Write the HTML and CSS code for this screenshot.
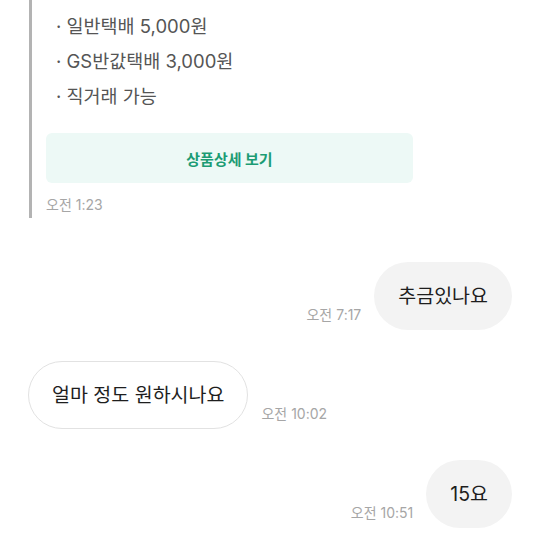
FILE: index.html
```html
<!DOCTYPE html>
<html lang="ko">

<head>
    <meta charset="utf-8">
    <title>채팅</title>
    <link rel="stylesheet" href="styles.css">
</head>

<body>
    <main class="chat">

        <section class="share">
            <ul class="info">
                <li>· 거래방법</li>
                <li>· 일반택배 5,000원</li>
                <li>· GS반값택배 3,000원</li>
                <li>· 직거래 가능</li>
            </ul>
            <button class="detail">상품상세 보기</button>
            <p class="time">오전 1:23</p>
        </section>

        <div class="row mine">
            <span class="time">오전 7:17</span>
            <p class="bubble">추금있나요</p>
        </div>

        <div class="row theirs">
            <p class="bubble">얼마 정도 원하시나요</p>
            <span class="time">오전 10:02</span>
        </div>

        <div class="row mine">
            <span class="time">오전 10:51</span>
            <p class="bubble">15요</p>
        </div>

    </main>
</body>

</html>
```

FILE: styles.css
```css
html,
body {
    margin: 0;
    padding: 0;
    background-color: #ffffff;
}

body {
    font-family: Inter, "Noto Sans CJK KR", sans-serif;
    color: #1e1e1e;
    overflow: hidden;
}

.chat {
    display: flex;
    flex-direction: column;
}

.share {
    margin-left: 29px;
    border-left: 3px solid #b3b3b3;
    padding-left: 14px;
    padding-bottom: 4px;
    width: 367px;
}

.info {
    list-style: none;
    margin: -26px 0 0 0;
    padding: 0 0 0 10px;
    font-size: 18.5px;
    line-height: 35px;
    color: #555555;
}

.detail {
    display: block;
    width: 367px;
    height: 50px;
    margin-top: 19px;
    border: none;
    border-radius: 6px;
    background-color: #edf9f6;
    color: #1c9c74;
    font-family: Inter, "Noto Sans CJK KR", sans-serif;
    font-size: 15px;
    font-weight: bold;
}

.time {
    font-size: 14px;
    line-height: 18px;
    color: #a6a6a6;
}

.share .time {
    margin: 13px 0 0 0;
}

.row {
    display: flex;
    align-items: flex-end;
    gap: 13px;
    padding: 0 28px;
}

.row .time {
    margin-bottom: 6px;
}

.mine {
    justify-content: flex-end;
}

.bubble {
    margin: 0;
    padding: 21px 24px;
    font-size: 19.5px;
    line-height: 26px;
    border-radius: 34px;
}

.mine .bubble {
    background-color: #f3f3f3;
}

.theirs .bubble {
    background-color: #ffffff;
    border: 1px solid #e2e2e2;
    padding: 20px 23px;
}

.share + .row {
    margin-top: 44px;
}

.row + .row {
    margin-top: 31px;
}
```
